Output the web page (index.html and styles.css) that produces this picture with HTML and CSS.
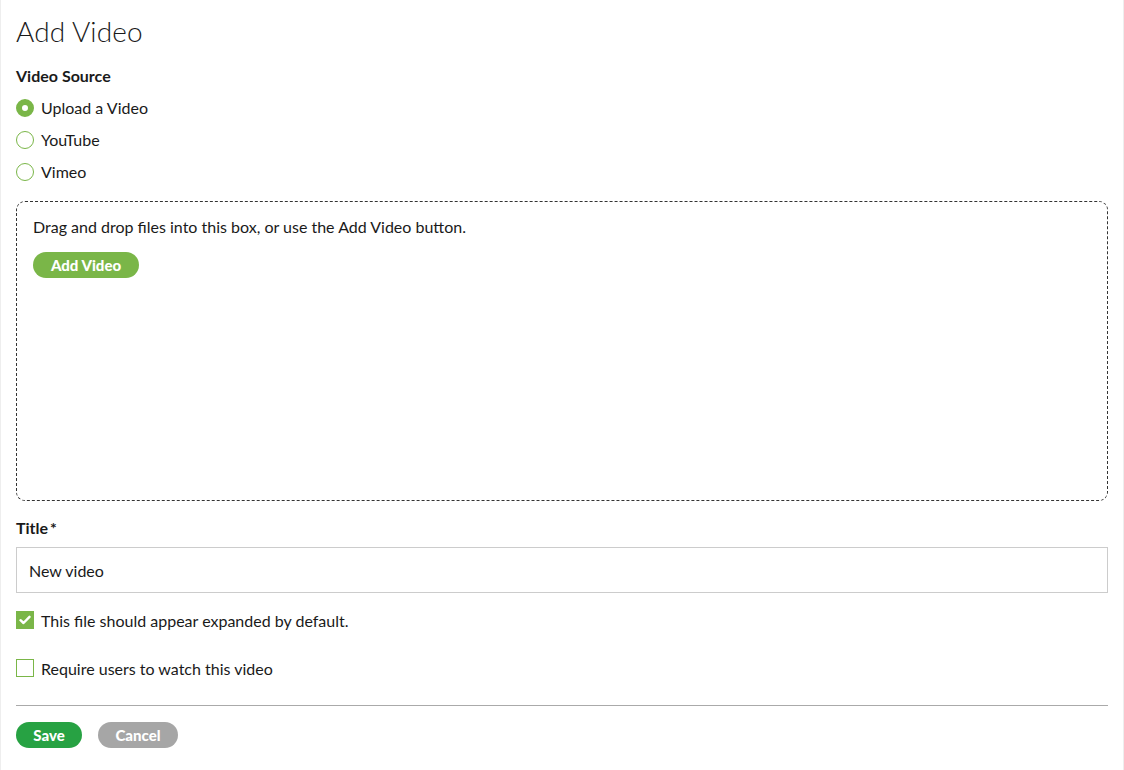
FILE: index.html
```html
<!DOCTYPE html>
<html>
<head>
<meta charset="utf-8">
<link rel="stylesheet" href="styles.css">
</head>
<body>
<div class="page">
  <h1 class="title">Add Video</h1>
  <div class="field-label">Video Source</div>
  <div class="radios">
    <label class="radio-row"><span class="radio checked"></span>Upload a Video</label>
    <label class="radio-row"><span class="radio"></span>YouTube</label>
    <label class="radio-row"><span class="radio"></span>Vimeo</label>
  </div>
  <div class="dropzone">
    <p class="drop-text">Drag and drop files into this box, or use the Add Video button.</p>
    <button class="btn btn-light-green">Add Video</button>
  </div>
  <div class="field-label title-label">Title<span class="req">*</span></div>
  <div class="input">New video</div>
  <label class="check-row first"><span class="checkbox checked"><svg width="12" height="10" viewBox="0 0 12 10"><path d="M1.5 5.2 L4.5 8 L10.5 1.8" fill="none" stroke="#fff" stroke-width="2.4" stroke-linecap="round" stroke-linejoin="round"/></svg></span>This file should appear expanded by default.</label>
  <label class="check-row second"><span class="checkbox"></span>Require users to watch this video</label>
  <hr class="divider">
  <div class="actions">
    <button class="btn btn-save">Save</button>
    <button class="btn btn-cancel">Cancel</button>
  </div>
</div>
</body>
</html>
```
FILE: styles.css
```css
* { box-sizing: border-box; }
html, body { margin: 0; padding: 0; background: #fff; }
body {
  font-family: "Lato", "Liberation Sans", sans-serif;
  color: #1a1a1a;
  font-size: 16px;
}
.page {
  padding: 16px 15px 0 15px;
  border-left: 1px solid #eee;
  border-right: 1px solid #eee;
  min-height: 770px;
}
.title {
  margin: 0;
  font-weight: 300;
  font-size: 28px;
  line-height: 30px;
  letter-spacing: 0.1px;
}
.field-label {
  font-weight: 700;
  font-size: 16px;
  line-height: 20px;
  margin-top: 20px;
}
.radios {
  display: flex;
  flex-direction: column;
  gap: 12px;
  margin-top: 12px;
}
.radio-row {
  display: flex;
  align-items: center;
  gap: 7px;
  height: 20px;
  line-height: 20px;
}
.radio {
  width: 18px;
  height: 18px;
  border-radius: 50%;
  border: 1px solid #7ab648;
  background: #fff;
  display: inline-block;
}
.radio.checked {
  border: 6px solid #7ab648;
}
.dropzone {
  margin-top: 19px;
  height: 300px;
  border: 1px dashed #333;
  border-radius: 9px;
  padding: 15px 16px;
}
.drop-text {
  margin: 0;
  line-height: 20px;
}
.btn {
  border: none;
  border-radius: 13px;
  height: 26px;
  padding: 0 15px;
  color: #fff;
  font-family: "Lato", "Liberation Sans", sans-serif;
  font-weight: 900;
  font-size: 15px;
  cursor: pointer;
}
.btn-light-green {
  background: #7ab648;
  margin-top: 15px;
  width: 106px;
  padding: 0;
}
.title-label { margin-top: 17px; }
.req { margin-left: 2px; }
.input {
  margin-top: 9px;
  height: 46px;
  border: 1px solid #ccc;
  padding: 0 12px;
  display: flex;
  align-items: center;
}
.check-row {
  display: flex;
  align-items: center;
  gap: 7px;
  height: 20px;
}
.check-row.first { margin-top: 17px; }
.check-row.second { margin-top: 28px; }
.checkbox {
  width: 18px;
  height: 18px;
  border: 1px solid #7ab648;
  display: inline-flex;
  align-items: center;
  justify-content: center;
}
.checkbox.checked { background: #7ab648; }
.divider {
  margin: 27px 0 0 0;
  border: none;
  border-top: 1px solid #aaa;
}
.actions {
  display: flex;
  gap: 16px;
  margin-top: 16px;
}
.btn-save { background: #27a243; width: 66px; padding: 0; }
.btn-cancel { background: #a6a6a6; width: 80px; padding: 0; }
```
